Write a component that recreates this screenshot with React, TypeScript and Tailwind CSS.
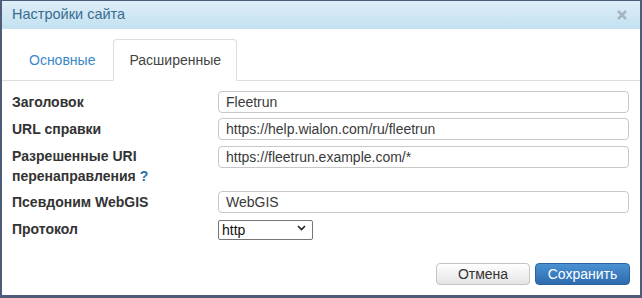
import { useState } from "react";

const FONT = "font-['Liberation_Sans',Arial,sans-serif]";

function Field({ value }: { value: string }) {
  return (
    <input
      type="text"
      defaultValue={value}
      className="w-full h-[22px] border border-[#c8c8c8] rounded-[4px] bg-white px-[7px] text-[14px] text-[#3a3a3a] outline-none"
    />
  );
}

export default function App() {
  const [tab, setTab] = useState<"main" | "adv">("adv");

  return (
    <div className={`${FONT} w-[642px] h-[298px] bg-[#4e5c78] pt-[1px] pl-[2px] pr-[2px] pb-[3px]`}>
      <div className="flex flex-col h-full bg-white">
        {/* Header */}
        <div className="flex items-center justify-between h-[28px] pl-[10px] pr-[13px] bg-gradient-to-b from-[#deeef8] to-[#c3e1f0]">
          <span className="text-[14.5px] text-[#3b6d8e]">Настройки сайта</span>
          <svg width="10" height="10" viewBox="0 0 10 10" className="text-[#a7b6be]">
            <path d="M1 1 9 9M9 1 1 9" stroke="currentColor" strokeWidth="2.6" />
          </svg>
        </div>

        {/* Tabs */}
        <div className="flex items-end pt-[10px] pl-[11px] border-b border-[#dddddd]">
          <button
            onClick={() => setTab("main")}
            className={`mr-[2px] -mb-px px-[15px] py-[10px] leading-[20px] text-[14px] rounded-t-[4px] border ${
              tab === "main" ? "bg-white border-[#dddddd] border-b-white text-[#444]" : "border-transparent text-[#3a87c8]"
            }`}
          >
            Основные
          </button>
          <button
            onClick={() => setTab("adv")}
            className={`-mb-px px-[15px] py-[10px] leading-[20px] text-[14px] rounded-t-[4px] border ${
              tab === "adv" ? "bg-white border-[#dddddd] border-b-white text-[#444]" : "border-transparent text-[#3a87c8]"
            }`}
          >
            Расширенные
          </button>
        </div>

        {/* Form */}
        <div className="grid grid-cols-[206px_1fr] gap-y-[5px] pt-[10px] pl-[10px] pr-[11px]">
          <div className="text-[14px] font-bold leading-[20px] text-[#333] pt-[1px]">Заголовок</div>
          <Field value="Fleetrun" />

          <div className="text-[14px] font-bold leading-[20px] text-[#333] pt-[1px]">URL справки</div>
          <Field value="https://help.wialon.com/ru/fleetrun" />

          <div className="text-[14px] font-bold leading-[20px] text-[#333] pt-[1px]">
            Разрешенные URI
            <br />
            перенаправления <span className="text-[#2b6ea3]">?</span>
          </div>
          <div>
            <Field value="https://fleetrun.example.com/*" />
          </div>

          <div className="text-[14px] font-bold leading-[20px] text-[#333] pt-[1px]">Псевдоним WebGIS</div>
          <Field value="WebGIS" />

          <div className="text-[14px] font-bold leading-[20px] text-[#333] pt-[1px]">Протокол</div>
          <div className="relative w-[95px] h-[20px]">
            <select
              defaultValue="http"
              className="w-full h-full appearance-none border border-[#767676] rounded-[2px] bg-white pl-[3px] text-[14px] leading-[18px] text-[#111] outline-none"
            >
              <option value="http">http</option>
              <option value="https">https</option>
            </select>
            <svg
              width="9"
              height="6"
              viewBox="0 0 9 6"
              className="absolute right-[7px] top-[7px] pointer-events-none text-[#222]"
            >
              <path d="M1 1 4.5 4.5 8 1" fill="none" stroke="currentColor" strokeWidth="1.6" />
            </svg>
          </div>
        </div>

        {/* Footer */}
        <div className="mt-auto flex justify-end gap-[5px] pr-[10px] pb-[10px]">
          <button className="w-[94px] h-[22px] rounded-[4px] border border-[#c4c4c4] bg-gradient-to-b from-[#ffffff] to-[#e4e4e4] text-[14px] text-[#333]">
            Отмена
          </button>
          <button className="w-[95px] h-[22px] rounded-[4px] border border-[#2a64a0] bg-gradient-to-b from-[#4b92d3] to-[#2c6bae] text-[14px] text-white">
            Сохранить
          </button>
        </div>
      </div>
    </div>
  );
}
